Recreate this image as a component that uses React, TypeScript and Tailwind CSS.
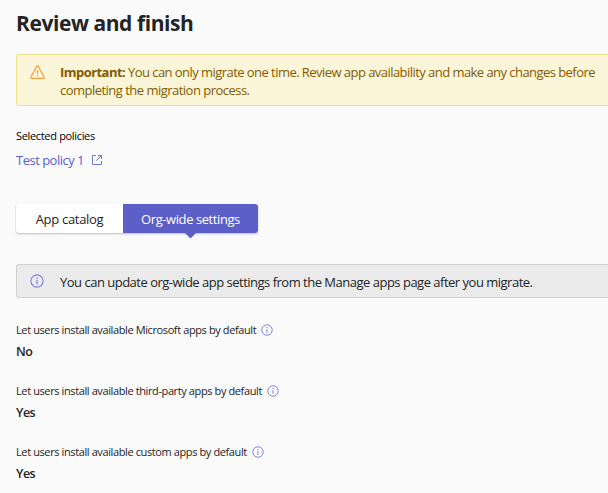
import type { ReactNode } from "react";

function InfoIcon({ size }: { size: number }) {
  return (
    <svg width={size} height={size} viewBox="0 0 14 14" fill="none" className="shrink-0 text-[#7b7fd9]">
      <circle cx="7" cy="7" r="6.1" stroke="currentColor" strokeWidth="1.1" />
      <path d="M7 6v4.2" stroke="currentColor" strokeWidth="1.2" />
      <circle cx="7" cy="4.2" r="0.8" fill="currentColor" />
    </svg>
  );
}

function WarningIcon() {
  return (
    <svg width="15" height="14" viewBox="0 0 15 14" fill="none" className="shrink-0 text-[#f7a03c]">
      <path d="M6.8 1.1a.8.8 0 0 1 1.4 0l6 11.2a.7.7 0 0 1-.6 1H1.4a.7.7 0 0 1-.6-1z" stroke="currentColor" strokeWidth="1.2" strokeLinejoin="round" />
      <path d="M7.5 5v4" stroke="currentColor" strokeWidth="1.2" />
      <circle cx="7.5" cy="10.8" r="0.75" fill="currentColor" />
    </svg>
  );
}

function OpenIcon() {
  return (
    <svg width="10" height="10" viewBox="0 0 10 10" fill="none" stroke="currentColor" className="shrink-0 text-[#7377d5]">
      <path d="M4 .5H.5v9h9V6M6 .5h3.5V4M9.3.7L4.3 5.7" />
    </svg>
  );
}

function Setting({ label, value }: { label: ReactNode; value: string }) {
  return (
    <div className="h-[61px]">
      <div className="flex h-4 items-center gap-[5px]">
        <span className="whitespace-nowrap text-[11px] leading-4 tracking-[-0.39px]">{label}</span>
        <InfoIcon size={12} />
      </div>
      <div className="mt-[5px] flex h-[18px] items-center">
        <span className="text-[12.5px] font-semibold leading-[18px] tracking-[-0.5px]">{value}</span>
      </div>
    </div>
  );
}

export default function App() {
  return (
    <main className="h-[493px] w-[608px] overflow-hidden bg-[#fafafa] pl-4 font-['Open_Sans','Noto_Sans',sans-serif] text-[#242424]">
      <h1 className="flex h-[54px] items-start pt-[9px] text-[21px] font-bold leading-[28px]">
        <span className="whitespace-nowrap tracking-[-0.43px]">Review and finish</span>
      </h1>

      <section className="flex h-[52px] items-start rounded-l-[3px] border border-r-0 border-[#f0e288] bg-[#fbf5d9] pl-[13px] text-[13px] leading-[18px] text-[#835b00]">
        <div className="mt-[10px]"><WarningIcon /></div>
        <div className="ml-[15px] mt-[8px] flex flex-col items-start whitespace-nowrap">
          <span className="tracking-[-0.55px]"><b className="font-bold">Important:</b> You can only migrate one time. Review app availability and make any changes before</span>
          <span className="tracking-[-0.52px]">completing the migration process.</span>
        </div>
      </section>

      <section className="flex h-[98px] flex-col items-start pt-[22px]">
        <span className="text-[11px] leading-4 tracking-[-0.33px] text-black">Selected policies</span>
        <a className="mt-[7px] flex items-center gap-2 text-[13px] leading-[18px] text-[#5b5fc7]">
          <span className="tracking-[-0.5px]">Test policy 1</span>
          <OpenIcon />
        </a>
      </section>

      <nav className="flex h-[29px] w-[242px] rounded-[3px] bg-white text-[13px] shadow-[0_1px_2px_rgba(0,0,0,0.25)]">
        <button className="flex w-[107px] items-center justify-center pt-[2px]">
          <span className="tracking-[-0.3px]">App catalog</span>
        </button>
        <button className="relative flex w-[135px] items-center justify-center rounded-r-[3px] bg-[#5b5fc7] pt-[2px] text-white">
          <span className="tracking-[-0.42px]">Org-wide settings</span>
          <svg className="absolute left-[62px] top-[29px]" width="11" height="6" viewBox="0 0 11 6">
            <path d="M0 0h11L5.5 5.5z" fill="#5b5fc7" />
          </svg>
        </button>
      </nav>

      <section className="mt-[31px] flex h-[34px] items-center rounded-l-[3px] border border-r-0 border-[#d1d1d1] bg-[#ebebeb] pl-[13px] text-[13px]">
        <InfoIcon size={14} />
        <span className="ml-4 whitespace-nowrap pt-[3px] tracking-[-0.5px]">You can update org-wide app settings from the Manage apps page after you migrate.</span>
      </section>

      <section className="pt-[24px]">
        <Setting label="Let users install available Microsoft apps by default" value="No" />
        <Setting label="Let users install available third-party apps by default" value="Yes" />
        <Setting label="Let users install available custom apps by default" value="Yes" />
      </section>
    </main>
  );
}
